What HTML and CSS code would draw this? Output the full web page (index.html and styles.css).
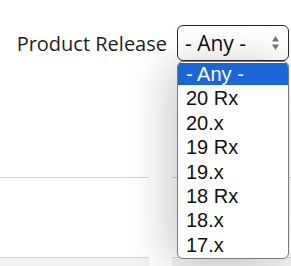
FILE: index.html
```html
<!DOCTYPE html>
<html lang="en">
<head>
    <meta charset="UTF-8">
    <meta name="viewport" content="width=device-width, initial-scale=1.0">
    <title>Product Release filter</title>
    <link rel="stylesheet" href="styles.css">
</head>
<body>
    <div class="filter">
        <label class="filter-label" for="release">Product Release</label>
        <div class="select" id="release">
            <span class="select-value">- Any -</span>
            <svg class="select-arrows" width="9" height="16" viewBox="0 0 9 16">
                <path d="M4.5 1 L8 6.5 H1 Z" fill="#777"/>
                <path d="M4.5 15 L8 9.5 H1 Z" fill="#777"/>
            </svg>
        </div>
    </div>

    <div class="content">
        <div class="column">
            <div class="row"></div>
            <div class="row-foot"></div>
        </div>
        <div class="column">
            <div class="row"></div>
            <div class="row-foot"></div>
        </div>
    </div>

    <!-- open dropdown list -->
    <ul class="options">
        <li class="option selected">- Any -</li>
        <li class="option">20 Rx</li>
        <li class="option">20.x</li>
        <li class="option">19 Rx</li>
        <li class="option">19.x</li>
        <li class="option">18 Rx</li>
        <li class="option">18.x</li>
        <li class="option">17.x</li>
    </ul>
</body>
</html>
```

FILE: styles.css
```css
body {
    margin: 0;
    width: 291px;
    height: 266px;
    overflow: hidden;
    background: #fff;
    font-family: 'Open Sans', 'Liberation Sans', sans-serif;
    color: #222;
}
.filter {
    display: flex;
    justify-content: flex-end;
    align-items: center;
    gap: 10px;
    padding: 25px 2px 0 0;
    height: 36px;
}
.filter-label {
    font-size: 20px;
    font-weight: 500;
    color: #1e1e1e;
}
.select {
    box-sizing: border-box;
    width: 112px;
    height: 36px;
    border: 1px solid #2a2a2a;
    border-radius: 6px;
    display: flex;
    align-items: center;
    justify-content: space-between;
    padding: 0 8px 0 7px;
}
.select-value {
    font-size: 21px;
    color: #111;
}
.content {
    display: grid;
    grid-template-columns: 149px 1fr;
    column-gap: 23px;
    margin-top: 116px;
}
.row {
    height: 79px;
    border-top: 1px solid #d6d6d6;
}
.row-foot {
    height: 20px;
    border-top: 1px solid #d6d6d6;
    background: #f3f3f3;
}
.options {
    position: absolute;
    left: 177px;
    top: 61px;
    width: 110px;
    height: 195px;
    margin: 0;
    padding: 1px 0 0 0;
    list-style: none;
    background: #fff;
    border: 1px solid #7a7a7a;
    border-radius: 6px;
    box-shadow: -8px 4px 45px rgba(0, 0, 0, 0.22);
    font-family: 'Liberation Sans', Arial, sans-serif;
    font-size: 20px;
    color: #111;
    overflow: hidden;
}
.option {
    height: 24.4px;
    line-height: 22px;
    padding-left: 8px;
}
.option.selected {
    height: 22px;
    margin-bottom: 2.4px;
    background: #1a66d8;
    color: #fff;
}
```
